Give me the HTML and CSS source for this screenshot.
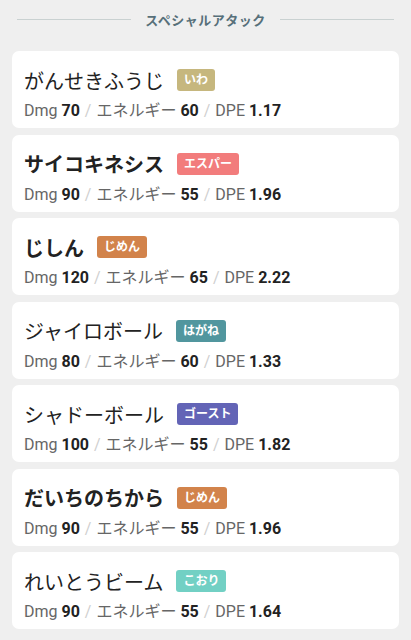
FILE: index.html
```html
<!DOCTYPE html>
<html lang="ja">
<head>
    <meta charset="UTF-8">
    <meta name="viewport" content="width=device-width, initial-scale=1.0">
    <title>スペシャルアタック</title>
    <link rel="stylesheet" href="styles.css">
</head>
<body>
    <div class="section-title">
        <span class="rule"></span>
        <h2>スペシャルアタック</h2>
        <span class="rule"></span>
    </div>
    <ul class="moves">
        <li class="move">
            <div class="move-head"><span class="name">がんせきふうじ</span><span class="type rock">いわ</span></div>
            <div class="stats">Dmg <b>70</b> <i>/</i> エネルギー <b>60</b> <i>/</i> DPE <b>1.17</b></div>
        </li>
        <li class="move">
            <div class="move-head"><span class="name strong">サイコキネシス</span><span class="type psychic">エスパー</span></div>
            <div class="stats">Dmg <b>90</b> <i>/</i> エネルギー <b>55</b> <i>/</i> DPE <b>1.96</b></div>
        </li>
        <li class="move">
            <div class="move-head"><span class="name strong">じしん</span><span class="type ground">じめん</span></div>
            <div class="stats">Dmg <b>120</b> <i>/</i> エネルギー <b>65</b> <i>/</i> DPE <b>2.22</b></div>
        </li>
        <li class="move">
            <div class="move-head"><span class="name">ジャイロボール</span><span class="type steel">はがね</span></div>
            <div class="stats">Dmg <b>80</b> <i>/</i> エネルギー <b>60</b> <i>/</i> DPE <b>1.33</b></div>
        </li>
        <li class="move">
            <div class="move-head"><span class="name">シャドーボール</span><span class="type ghost">ゴースト</span></div>
            <div class="stats">Dmg <b>100</b> <i>/</i> エネルギー <b>55</b> <i>/</i> DPE <b>1.82</b></div>
        </li>
        <li class="move">
            <div class="move-head"><span class="name strong">だいちのちから</span><span class="type ground">じめん</span></div>
            <div class="stats">Dmg <b>90</b> <i>/</i> エネルギー <b>55</b> <i>/</i> DPE <b>1.96</b></div>
        </li>
        <li class="move">
            <div class="move-head"><span class="name">れいとうビーム</span><span class="type ice">こおり</span></div>
            <div class="stats">Dmg <b>90</b> <i>/</i> エネルギー <b>55</b> <i>/</i> DPE <b>1.64</b></div>
        </li>
    </ul>
</body>
</html>
```

FILE: styles.css
```css
body {
    font-family: Roboto, "Noto Sans CJK JP", sans-serif;
    background-color: #efefef;
    margin: 0;
    padding: 0;
    color: #222;
}
.section-title {
    display: flex;
    align-items: center;
    gap: 14px;
    padding: 8px 17px 0;
    height: 22px;
}
.section-title .rule {
    flex: 1;
    height: 1px;
    background-color: #c9d1d1;
}
.section-title h2 {
    margin: 0;
    font-size: 13px;
    font-weight: 700;
    color: #57707a;
    letter-spacing: 0.5px;
}
.moves {
    list-style: none;
    margin: 0;
    padding: 21px 12px 0;
    display: flex;
    flex-direction: column;
    gap: 6.5px;
}
.move {
    background-color: #fff;
    border-radius: 7px;
    height: 77px;
    box-sizing: border-box;
    padding: 17px 12px 0;
}
.move-head {
    display: flex;
    align-items: center;
    height: 24px;
}
.name {
    font-size: 20px;
    font-weight: 400;
    color: #222;
    margin-right: 13px;
}
.name.strong {
    font-weight: 700;
}
.type {
    color: #fff;
    font-size: 12px;
    font-weight: 700;
    padding: 0 7px;
    height: 22px;
    line-height: 22px;
    border-radius: 3px;
}
.rock { background-color: #c6b77e; }
.psychic { background-color: #f27c7c; }
.ground { background-color: #d2834b; }
.steel { background-color: #51969e; }
.ghost { background-color: #6364b6; }
.ice { background-color: #72d0c4; }
.stats {
    margin-top: 9px;
    font-size: 16px;
    line-height: 20px;
    color: #666;
}
.stats b {
    color: #222;
    font-weight: 700;
}
.stats i {
    font-style: normal;
    color: #cfcfcf;
    margin: 0 1px;
}
```
